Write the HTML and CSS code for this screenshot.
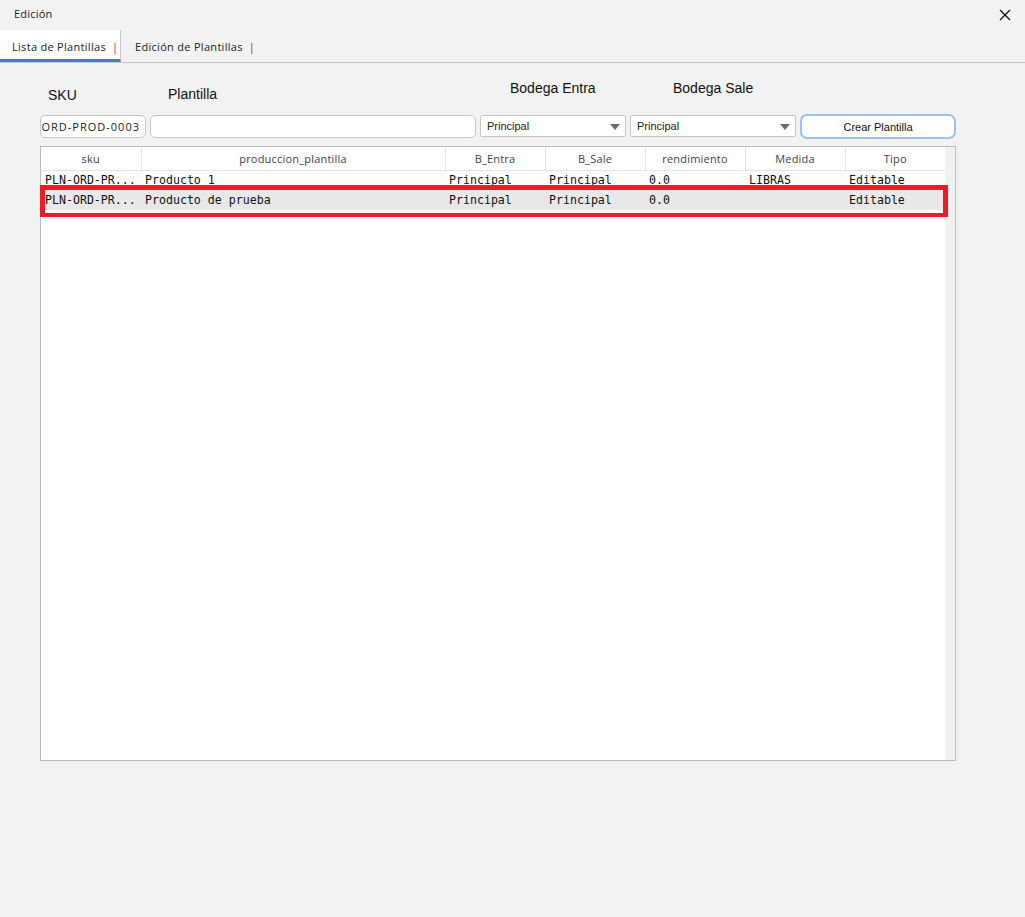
FILE: index.html
```html
<!DOCTYPE html>
<html lang="es">

<head>
    <meta charset="UTF-8">
    <meta name="viewport" content="width=device-width, initial-scale=1.0">
    <title>Edición</title>
    <link rel="stylesheet" href="styles.css">
</head>

<body>
    <header class="titlebar">
        <span class="title">Edición</span>
        <button class="close-button" title="Cerrar">
            <svg width="12" height="12" viewBox="0 0 12 12">
                <path d="M1 1 L11 11 M11 1 L1 11" stroke="#111" stroke-width="1.3" fill="none" />
            </svg>
        </button>
    </header>

    <nav class="tabs">
        <div class="tab active">Lista de Plantillas <span class="tab-bar">|</span></div>
        <div class="tab">Edición de Plantillas <span class="tab-bar">|</span></div>
    </nav>

    <main>
        <div class="form-row">
            <div class="field field-sku">
                <label class="label label-sku">SKU</label>
                <div class="text-box sku-box"><span>PLN-ORD-PROD-0003</span></div>
            </div>
            <div class="field field-name">
                <label class="label label-name">Plantilla</label>
                <div class="text-box"></div>
            </div>
            <div class="field field-in">
                <label class="label label-in">Bodega Entra</label>
                <div class="select-box">Principal<span class="arrow"></span></div>
            </div>
            <div class="field field-out">
                <label class="label label-out">Bodega Sale</label>
                <div class="select-box">Principal<span class="arrow"></span></div>
            </div>
            <div class="field field-button">
                <button class="create-button">Crear Plantilla</button>
            </div>
        </div>

        <div class="grid">
            <div class="grid-body">
                <table id="templateTable">
                    <colgroup>
                        <col class="col-sku">
                        <col class="col-name">
                        <col class="col-std">
                        <col class="col-std">
                        <col class="col-std">
                        <col class="col-std">
                        <col class="col-std">
                    </colgroup>
                    <thead>
                        <tr>
                            <th>sku</th>
                            <th>produccion_plantilla</th>
                            <th>B_Entra</th>
                            <th>B_Sale</th>
                            <th>rendimiento</th>
                            <th>Medida</th>
                            <th>Tipo</th>
                        </tr>
                    </thead>
                    <tbody>
                        <tr>
                            <td>PLN-ORD-PR...</td>
                            <td>Producto 1</td>
                            <td>Principal</td>
                            <td>Principal</td>
                            <td>0.0</td>
                            <td>LIBRAS</td>
                            <td>Editable</td>
                        </tr>
                        <tr class="selected">
                            <td>PLN-ORD-PR...</td>
                            <td>Producto de prueba</td>
                            <td>Principal</td>
                            <td>Principal</td>
                            <td>0.0</td>
                            <td></td>
                            <td>Editable</td>
                        </tr>
                    </tbody>
                </table>
            </div>
            <div class="vscroll"></div>
            <div class="highlight"></div>
        </div>
    </main>
</body>

</html>
```

FILE: styles.css
```css
body {
    margin: 0;
    padding: 0;
    background-color: #f2f2f2;
    font-family: 'Open Sans', sans-serif;
    color: #222;
}

.titlebar {
    height: 30px;
    display: flex;
    align-items: center;
    justify-content: space-between;
    padding: 0 13px 0 14px;
    box-sizing: border-box;
}

.title {
    font-size: 11px;
    letter-spacing: 0.2px;
    padding-bottom: 3px;
}

.close-button {
    border: none;
    background: none;
    padding: 0;
    width: 14px;
    height: 14px;
    display: flex;
    align-items: center;
    justify-content: center;
    cursor: pointer;
}

.tabs {
    display: flex;
    height: 32px;
    border-bottom: 1px solid #c8c8c8;
}

.tab {
    font-size: 11px;
    letter-spacing: 0.3px;
    white-space: nowrap;
    padding: 0 12px;
    display: flex;
    align-items: center;
    box-sizing: border-box;
    height: 32px;
    color: #222;
}

.tab.active {
    background-color: #fff;
    border-right: 1px solid #c8c8c8;
    border-bottom: 3px solid #3f80c6;
    padding-top: 3px;
    width: 121px;
}

.tab + .tab {
    padding-left: 14px;
}

.tab-bar {
    color: #8c2444;
    margin-left: 6px;
}

main {
    padding: 0 69px 0 40px;
}

.form-row {
    display: flex;
    gap: 4px;
    height: 76px;
    align-items: flex-end;
}

.field {
    display: flex;
    flex-direction: column;
}

.label {
    font-family: 'Liberation Sans', Arial, sans-serif;
    font-size: 14px;
    color: #111;
    height: 16px;
}

.label-sku {
    padding: 0 0 12px 8px;
}

.label-name {
    padding: 0 0 13px 18px;
}

.label-in {
    padding: 0 0 19px 30px;
}

.label-out {
    padding: 0 0 19px 43px;
}

.field-sku {
    width: 106px;
}

.field-name {
    width: 326px;
}

.field-in {
    width: 146px;
}

.field-out {
    width: 166px;
}

.field-button {
    width: 156px;
}

.text-box {
    height: 23px;
    box-sizing: border-box;
    background-color: #fff;
    border: 1px solid #c6c6c6;
    border-radius: 5px;
    margin-bottom: 1px;
}

.sku-box {
    display: flex;
    justify-content: flex-end;
    align-items: center;
    overflow: hidden;
    padding-right: 5px;
    font-size: 11px;
    letter-spacing: 1px;
    color: #222;
    white-space: nowrap;
}

.select-box {
    position: relative;
    height: 22px;
    box-sizing: border-box;
    background-color: #fff;
    border: 1px solid #c6c6c6;
    border-radius: 2px;
    margin-bottom: 2px;
    font-family: 'Liberation Sans', Arial, sans-serif;
    font-size: 11px;
    display: flex;
    align-items: center;
    padding-left: 6px;
}

.arrow {
    position: absolute;
    right: 5px;
    top: 8px;
    border-left: 5px solid transparent;
    border-right: 5px solid transparent;
    border-top: 6px solid #6b6b6b;
}

.create-button {
    height: 25px;
    box-sizing: border-box;
    background-color: #fff;
    border: 2px solid #9cc1ea;
    border-radius: 7px;
    font-family: 'Liberation Sans', Arial, sans-serif;
    font-size: 11px;
    color: #111;
    cursor: pointer;
}

.grid {
    position: relative;
    display: flex;
    margin-top: 7px;
    height: 615px;
    box-sizing: border-box;
    border: 1px solid #bdbdbd;
    background-color: #fff;
}

.grid-body {
    width: 904px;
}

.vscroll {
    width: 10px;
    background-color: #f2f2f2;
}

table {
    width: 904px;
    table-layout: fixed;
    border-collapse: collapse;
}

.col-sku {
    width: 100px;
}

.col-name {
    width: 304px;
}

.col-std {
    width: 100px;
}

th {
    height: 23px;
    padding: 0;
    font-family: 'Open Sans', sans-serif;
    font-weight: normal;
    font-size: 11px;
    letter-spacing: 0.2px;
    color: #444;
    text-align: center;
    border-right: 1px solid #e3e3e3;
    border-bottom: 1px solid #e3e3e3;
}

th:last-child {
    border-right: none;
}

td {
    height: 19px;
    padding: 0 0 0 4px;
    font-family: 'DejaVu Sans Mono', monospace;
    font-size: 11.6px;
    color: #111;
    white-space: nowrap;
    overflow: hidden;
}

tbody tr:first-child td {
    height: 18px;
}

tr.selected td {
    background-color: #e8e8e8;
    height: 21px;
}

.highlight {
    position: absolute;
    left: -1px;
    top: 38px;
    width: 908px;
    height: 32px;
    box-sizing: border-box;
    border: 5px solid #ed1c24;
    border-width: 5px 5px 4px 5px;
    pointer-events: none;
}
```
